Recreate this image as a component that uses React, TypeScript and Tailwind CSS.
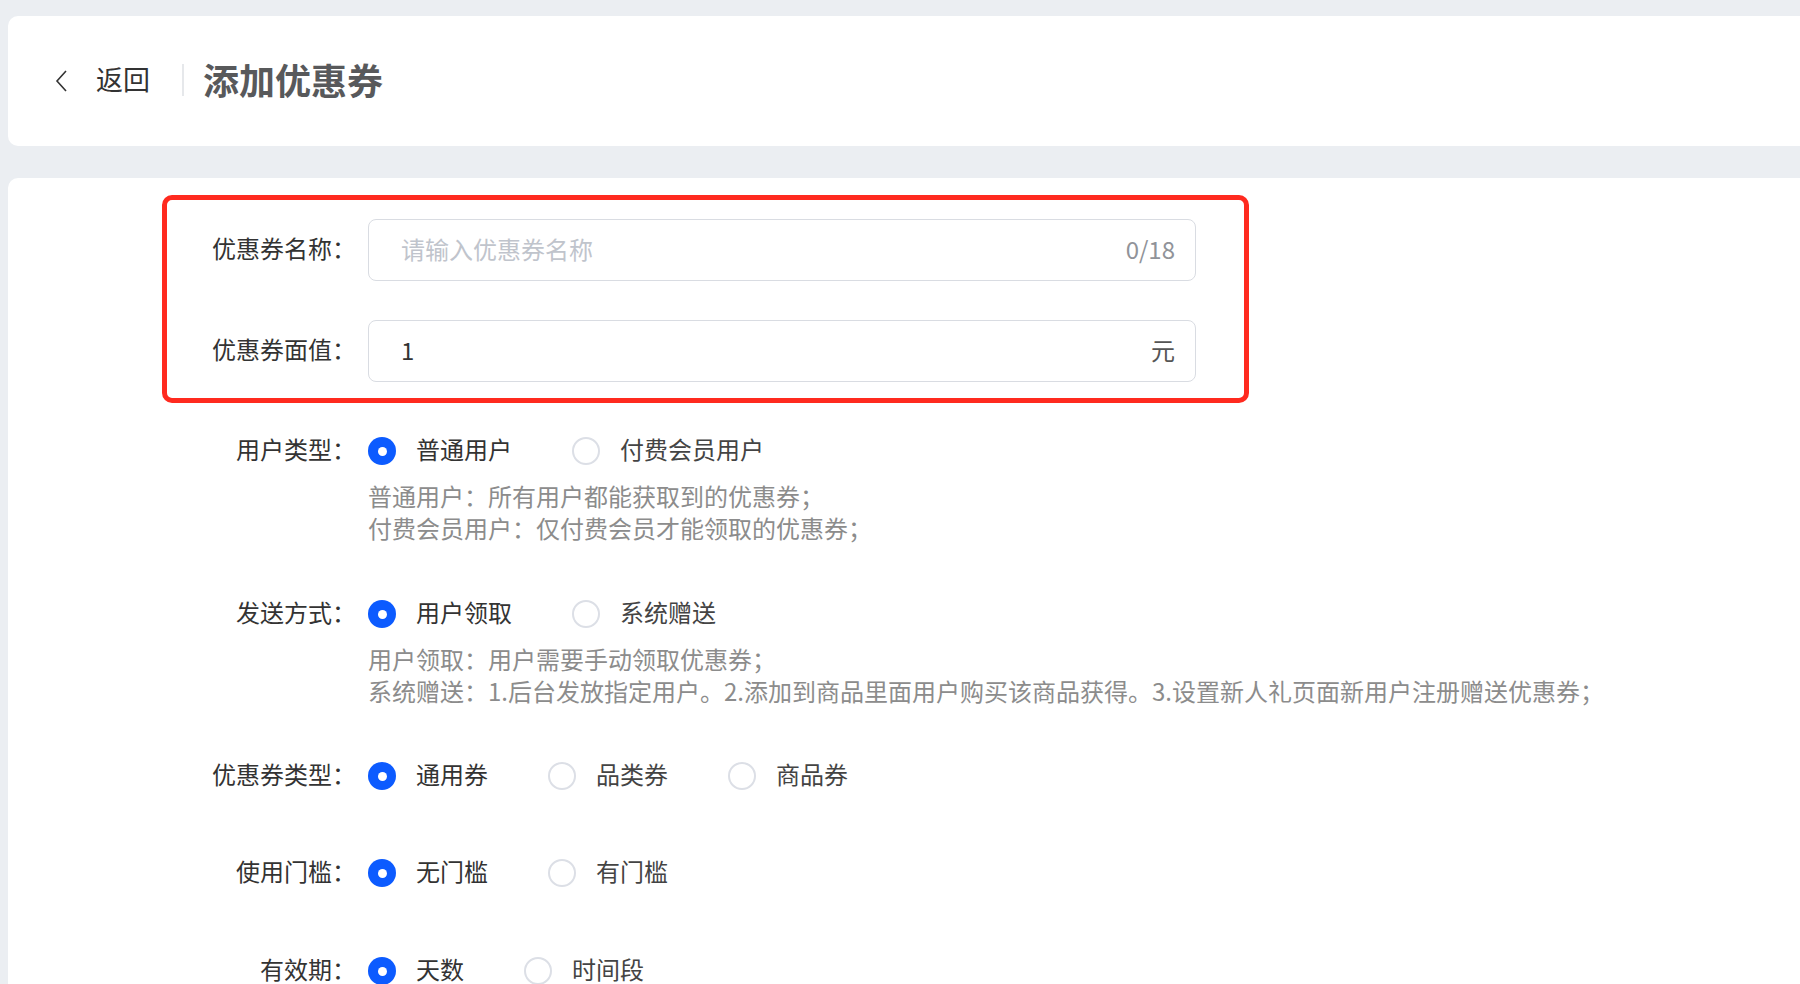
import React from "react";

type Opt = { label: string; checked?: boolean };

function Radio({ checked }: { checked?: boolean }) {
  if (checked) {
    return (
      <span className="flex h-[28px] w-[28px] shrink-0 items-center justify-center rounded-full bg-[#0c5bff]">
        <span className="h-[9px] w-[9px] rounded-full bg-white" />
      </span>
    );
  }
  return <span className="h-[28px] w-[28px] shrink-0 rounded-full border-[2px] border-[#dcdfe6] bg-white" />;
}

function RadioRow({ label, options }: { label: string; options: Opt[] }) {
  return (
    <div className="flex h-[28px] items-center pl-[5px]">
      <div className="w-[189px] shrink-0 pb-[5px] text-right text-[24px] leading-[28px] text-[#333]">{label}</div>
      <div className="ml-[12px] flex items-center">
        {options.map((o) => (
          <div key={o.label} className="mr-[60px] flex items-center">
            <Radio checked={o.checked} />
            <span
              className={
                "ml-[20px] pb-[5px] text-[24px] leading-[28px] " + (o.checked ? "text-[#333]" : "text-[#444]")
              }
            >
              {o.label}
            </span>
          </div>
        ))}
      </div>
    </div>
  );
}

function Desc({ lines }: { lines: string[] }) {
  return (
    <div className="mt-[15px] pl-[206px] text-[24px] leading-[32px] text-[#8c8c8c]">
      {lines.map((l) => (
        <div key={l} className="whitespace-nowrap">
          {l}
        </div>
      ))}
    </div>
  );
}

export default function App() {
  return (
    <div className="min-h-screen bg-[#ebeef2] pl-[8px] pt-[16px] font-['Noto_Sans_CJK_SC',sans-serif]">
      {/* header */}
      <div className="flex h-[130px] items-center rounded-l-[10px] bg-white pl-[47px]">
        <svg width="14" height="24" viewBox="0 0 14 24" className="mt-[-1px]">
          <polyline points="11,2 2,12 11,22" fill="none" stroke="#333" strokeWidth="1.6" strokeLinejoin="miter" />
        </svg>
        <span className="ml-[27px] pb-[5px] text-[27px] leading-[32px] text-[#333]">返回</span>
        <span className="ml-[32px] mb-[2px] h-[32px] w-[2px] bg-[#e6e8eb]" />
        <span className="ml-[19px] pb-[5px] text-[36px] font-bold leading-[40px] text-[#58595b]">添加优惠券</span>
      </div>

      {/* form card */}
      <div className="mt-[32px] rounded-tl-[10px] bg-white pb-[40px] pl-[154px] pt-[17px]">
        <div className="w-[1087px] rounded-[10px] border-[5px] border-[#ff2a1f] pb-[16px] pt-[19px]">
          <div className="flex items-center">
            <div className="w-[189px] shrink-0 pb-[5px] text-right text-[24px] leading-[28px] text-[#333]">优惠券名称：</div>
            <div className="ml-[12px] flex h-[62px] w-[828px] items-center rounded-[8px] border border-[#d9dce2] pb-[3px] pl-[32px] pr-[20px]">
              <input
                readOnly
                placeholder="请输入优惠券名称"
                className="flex-1 bg-transparent text-[24px] text-[#333] outline-none placeholder:text-[#c0c4cc]"
              />
              <span className="text-[24px] text-[#909399]">0/18</span>
            </div>
          </div>
          <div className="mt-[39px] flex items-center">
            <div className="w-[189px] shrink-0 pb-[5px] text-right text-[24px] leading-[28px] text-[#333]">优惠券面值：</div>
            <div className="ml-[12px] flex h-[62px] w-[828px] items-center rounded-[8px] border border-[#d9dce2] pb-[3px] pl-[32px] pr-[20px]">
              <input readOnly value="1" className="flex-1 bg-transparent text-[24px] text-[#333] outline-none" />
              <span className="text-[24px] text-[#555]">元</span>
            </div>
          </div>
        </div>

        <div className="mt-[34px]">
          <RadioRow label="用户类型：" options={[{ label: "普通用户", checked: true }, { label: "付费会员用户" }]} />
          <Desc lines={["普通用户：所有用户都能获取到的优惠券；", "付费会员用户：仅付费会员才能领取的优惠券；"]} />
        </div>

        <div className="mt-[56px]">
          <RadioRow label="发送方式：" options={[{ label: "用户领取", checked: true }, { label: "系统赠送" }]} />
          <Desc
            lines={[
              "用户领取：用户需要手动领取优惠券；",
              "系统赠送：1.后台发放指定用户。2.添加到商品里面用户购买该商品获得。3.设置新人礼页面新用户注册赠送优惠券；",
            ]}
          />
        </div>

        <div className="mt-[55px]">
          <RadioRow label="优惠券类型：" options={[{ label: "通用券", checked: true }, { label: "品类券" }, { label: "商品券" }]} />
        </div>
        <div className="mt-[69px]">
          <RadioRow label="使用门槛：" options={[{ label: "无门槛", checked: true }, { label: "有门槛" }]} />
        </div>
        <div className="mt-[70px]">
          <RadioRow label="有效期：" options={[{ label: "天数", checked: true }, { label: "时间段" }]} />
        </div>
      </div>
    </div>
  );
}
